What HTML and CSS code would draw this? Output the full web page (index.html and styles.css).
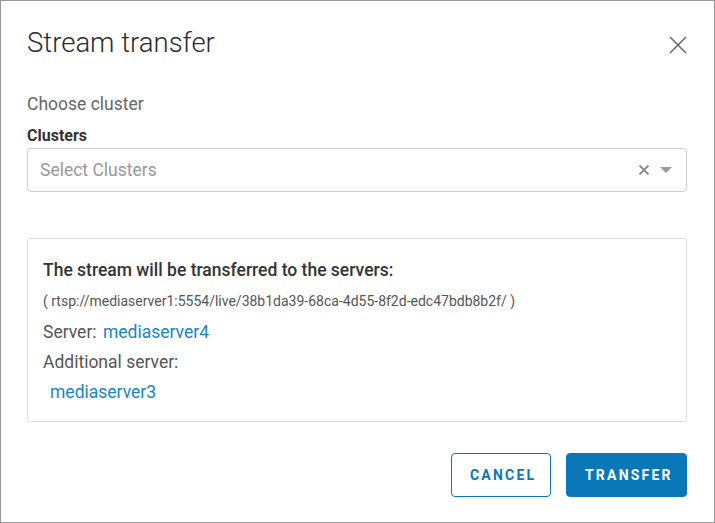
FILE: index.html
```html
<!DOCTYPE html>
<html lang="en">
<head>
    <meta charset="UTF-8">
    <meta name="viewport" content="width=device-width, initial-scale=1.0">
    <title>Stream transfer</title>
    <link rel="stylesheet" href="styles.css">
</head>
<body>
    <div class="dialog">
        <div class="dialog-header">
            <h1>Stream transfer</h1>
            <button class="close-button" aria-label="Close">
                <svg width="18" height="18" viewBox="0 0 18 18">
                    <path d="M1 1 L17 17 M17 1 L1 17" stroke="#6b6b6b" stroke-width="1.6" fill="none"/>
                </svg>
            </button>
        </div>

        <p class="hint">Choose cluster</p>
        <label class="field-label">Clusters</label>
        <div class="select">
            <span class="placeholder">Select Clusters</span>
            <span class="select-icons">
                <svg width="12" height="12" viewBox="0 0 12 12">
                    <path d="M1.5 1.5 L10.5 10.5 M10.5 1.5 L1.5 10.5" stroke="#8a8a8a" stroke-width="1.8" fill="none"/>
                </svg>
                <svg width="12" height="7" viewBox="0 0 12 7">
                    <path d="M0 0 L12 0 L6 6 Z" fill="#999"/>
                </svg>
            </span>
        </div>

        <!-- Transfer summary -->
        <div class="info-box">
            <p class="info-title">The stream will be transferred to the servers:</p>
            <p class="info-url">( rtsp://mediaserver1:5554/live/38b1da39-68ca-4d55-8f2d-edc47bdb8b2f/ )</p>
            <p class="info-row">Server: <a class="server-link" href="#">mediaserver4</a></p>
            <p class="info-row">Additional server:</p>
            <p class="info-row"><a class="server-link extra" href="#">mediaserver3</a></p>
        </div>

        <div class="dialog-actions">
            <button class="btn btn-outline">Cancel</button>
            <button class="btn btn-primary">Transfer</button>
        </div>
    </div>
</body>
</html>
```

FILE: styles.css
```css
* {
    box-sizing: border-box;
}

body {
    margin: 0;
    font-family: Roboto, 'Liberation Sans', sans-serif;
    background: #fff;
    color: #333;
}

.dialog {
    width: 715px;
    height: 523px;
    border: 1px solid #9a9a9a;
    padding: 22px 27px 0 26px;
    display: flex;
    flex-direction: column;
}

.dialog-header {
    display: flex;
    justify-content: space-between;
    align-items: center;
}

h1 {
    margin: 0;
    font-size: 27.5px;
    font-weight: 300;
    line-height: 40px;
    color: #2b2b2b;
}

.close-button {
    background: none;
    border: none;
    padding: 0;
    width: 18px;
    height: 18px;
    margin-top: 4px;
    cursor: pointer;
}

.hint {
    margin: 31px 0 0;
    font-size: 17.5px;
    line-height: 20px;
    color: #666;
}

.field-label {
    display: block;
    margin-top: 12px;
    font-size: 16px;
    font-weight: 700;
    line-height: 20px;
    color: #333;
}

.select {
    margin-top: 2px;
    height: 44px;
    border: 1px solid #ccc;
    border-radius: 4px;
    display: flex;
    align-items: center;
    justify-content: space-between;
    padding: 0 14px 0 12px;
}

.placeholder {
    font-size: 17.5px;
    color: #999;
}

.select-icons {
    display: flex;
    align-items: center;
    gap: 10px;
}

.info-box {
    margin-top: 46px;
    border: 1px solid #ddd;
    border-radius: 3px;
    padding: 16px 15px 14px;
}

.info-box p {
    margin: 0;
}

.info-title {
    font-size: 17.5px;
    font-weight: 500;
    line-height: 30px;
    color: #333;
}

.info-url {
    font-size: 14px;
    line-height: 32px;
    color: #555;
}

.info-row {
    font-size: 17.5px;
    line-height: 30px;
    color: #555;
}

.server-link {
    color: #1a84c6;
    text-decoration: none;
    margin-left: 2px;
}

.server-link.extra {
    margin-left: 7px;
}

.dialog-actions {
    margin-top: 31px;
    display: flex;
    justify-content: flex-end;
    gap: 15px;
}

.btn {
    height: 44px;
    border-radius: 4px;
    font-family: Roboto, 'Liberation Sans', sans-serif;
    font-size: 14px;
    font-weight: 700;
    letter-spacing: 2.2px;
    text-transform: uppercase;
    padding: 0 16px 0 18px;
    cursor: pointer;
}

.btn-outline {
    width: 100px;
    background: #fff;
    border: 1px solid #0a77b9;
    color: #0a77b9;
}

.btn-primary {
    width: 121px;
    background: #0a77b9;
    border: 1px solid #0a77b9;
    color: #fff;
}
```
